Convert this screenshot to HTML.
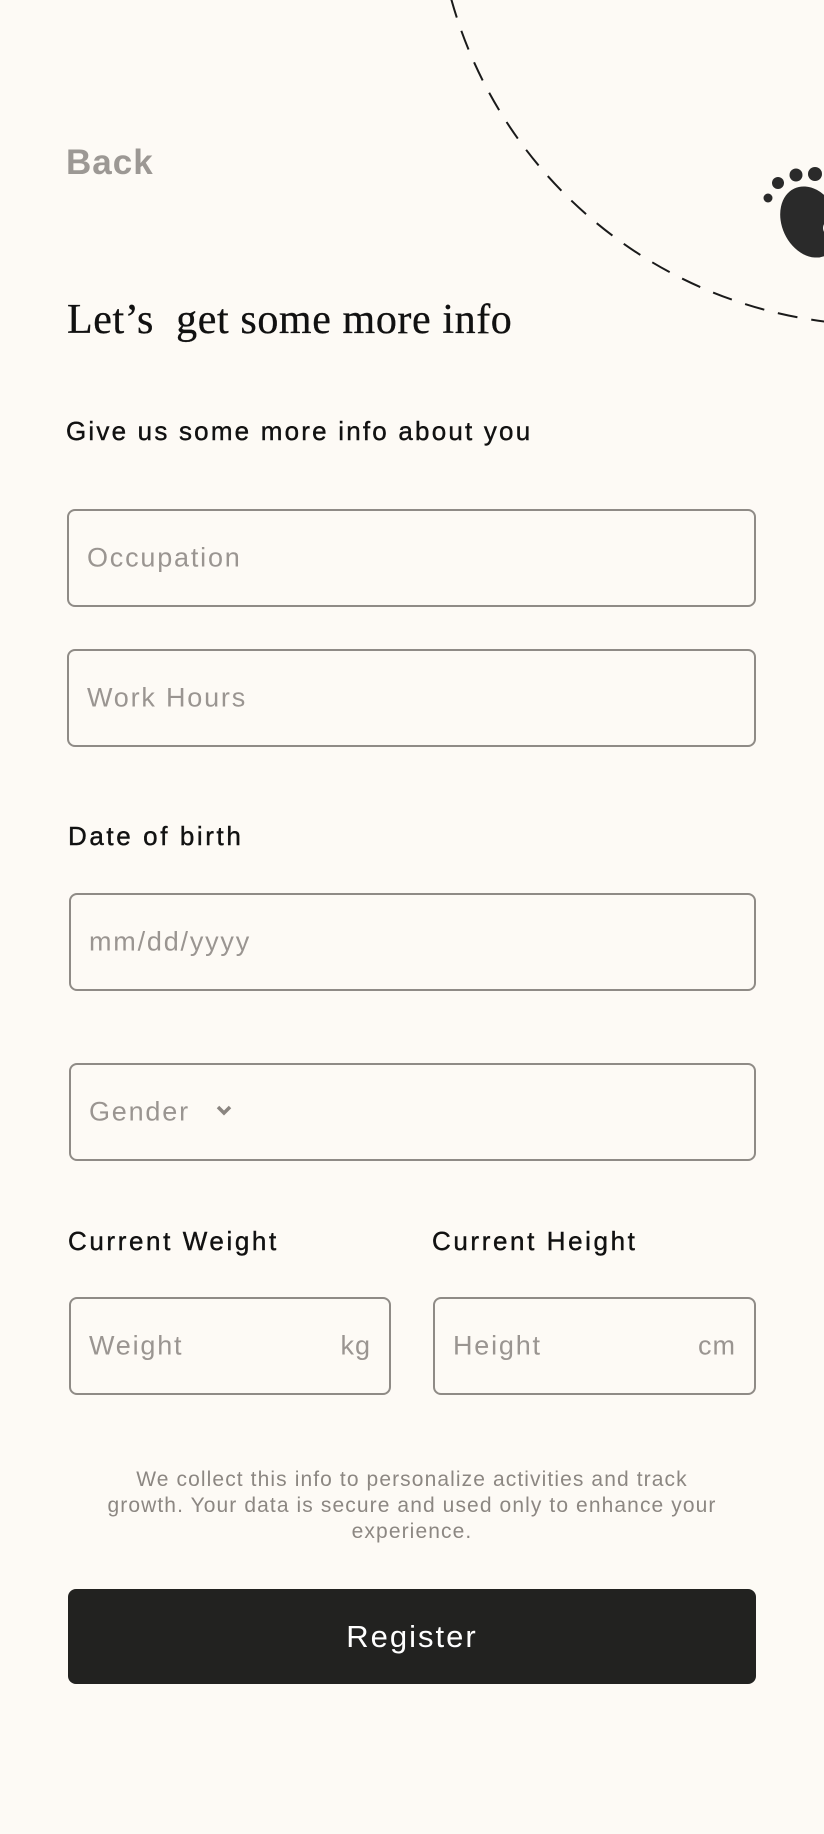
<!DOCTYPE html>
<html><head><meta charset="utf-8"><style>
*{margin:0;padding:0;box-sizing:border-box}
body{width:824px;height:1834px;background:#fdfaf5;position:relative;overflow:hidden;font-family:"Liberation Sans",sans-serif}
.a{position:absolute}
.box{position:absolute;border:2px solid #8f8b86;border-radius:8px;height:98px}
.ph{position:absolute;color:#9a9591;font-size:27px;letter-spacing:1.8px;top:50%;transform:translateY(-50%)}
.lbl{position:absolute;font-size:26px;color:#111;letter-spacing:2.6px;-webkit-text-stroke:0.4px #111}
</style></head><body>
<svg class="a" style="left:0;top:0" width="824" height="400">
<circle cx="880" cy="-120" r="445" fill="none" stroke="#1a1a1a" stroke-width="2" stroke-dasharray="20 14"/>
<circle cx="768" cy="198" r="4.5" fill="#2a2a2a"/>
<circle cx="778" cy="183" r="6" fill="#2a2a2a"/>
<circle cx="796" cy="175" r="6.5" fill="#2a2a2a"/>
<circle cx="815" cy="174" r="7" fill="#2a2a2a"/>
<ellipse cx="810" cy="222" rx="28" ry="37" transform="rotate(-25 810 222)" fill="#2a2a2a"/>
<circle cx="831" cy="228" r="8" fill="#fdfaf5"/>
</svg>
<div class="a" style="left:66px;top:143px;font-size:35px;font-weight:bold;color:#9c9894;letter-spacing:1px">Back</div>
<div class="a" style="left:67px;top:296px;font-family:'Liberation Serif',serif;font-size:42px;color:#111;letter-spacing:0.6px;-webkit-text-stroke:0.3px #111">Let’s&nbsp; get some more info</div>
<div class="a" style="left:66px;top:416px;font-size:26px;color:#111;letter-spacing:2.2px;-webkit-text-stroke:0.4px #111">Give us some more info about you</div>
<div class="box" style="left:67px;top:509px;width:689px"><span class="ph" style="left:18px">Occupation</span></div>
<div class="box" style="left:67px;top:649px;width:689px"><span class="ph" style="left:18px">Work Hours</span></div>
<div class="lbl" style="left:68px;top:821px">Date of birth</div>
<div class="box" style="left:69px;top:893px;width:687px"><span class="ph" style="left:18px">mm/dd/yyyy</span></div>
<div class="box" style="left:69px;top:1063px;width:687px"><span class="ph" style="left:18px">Gender</span>
<svg class="a" style="left:145px;top:40px" width="16" height="12"><path d="M2 2 L8 8 L14 2" fill="none" stroke="#8a8580" stroke-width="3.5"/></svg></div>
<div class="lbl" style="left:68px;top:1226px">Current Weight</div>
<div class="lbl" style="left:432px;top:1226px">Current Height</div>
<div class="box" style="left:69px;top:1297px;width:322px"><span class="ph" style="left:18px">Weight</span><span class="ph" style="right:18px;letter-spacing:1px">kg</span></div>
<div class="box" style="left:433px;top:1297px;width:323px"><span class="ph" style="left:18px">Height</span><span class="ph" style="right:18px;letter-spacing:1px">cm</span></div>
<div class="a" style="left:90px;width:644px;top:1467px;text-align:center;font-size:21px;line-height:26px;color:#8c8782;letter-spacing:1.1px">We collect this info to personalize activities and track<br>growth. Your data is secure and used only to enhance your<br>experience.</div>
<div class="a" style="left:68px;top:1589px;width:688px;height:95px;background:#222220;border-radius:8px;color:#fff;font-size:31px;letter-spacing:2px;display:flex;align-items:center;justify-content:center">Register</div>
</body></html>
